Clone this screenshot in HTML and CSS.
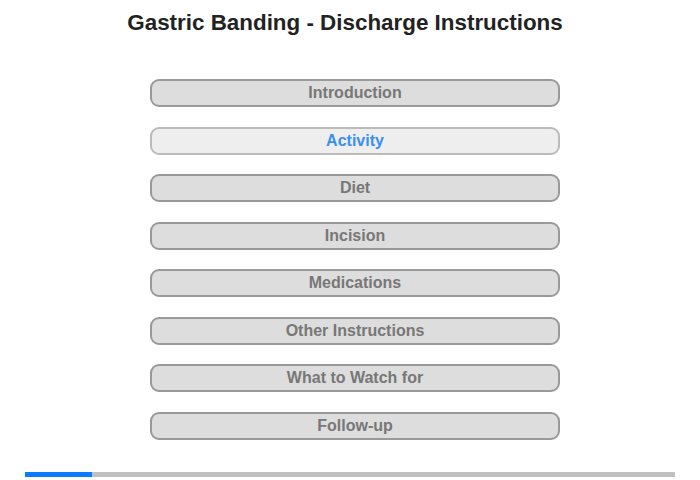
FILE: index.html
```html
<!DOCTYPE html>
<html lang="en">
<head>
  <meta charset="UTF-8" />
  <meta name="viewport" content="width=device-width, initial-scale=1.0"/>
  <title>Gastric Banding - Discharge Instructions</title>
  <link rel="stylesheet" href="styles.css">
</head>
<body>
  <h1 class="title">Gastric Banding - Discharge Instructions</h1>

  <nav class="menu">
    <a class="menu-btn" href="#">Introduction</a>
    <a class="menu-btn active" href="#">Activity</a>
    <a class="menu-btn" href="#">Diet</a>
    <a class="menu-btn" href="#">Incision</a>
    <a class="menu-btn" href="#">Medications</a>
    <a class="menu-btn" href="#">Other Instructions</a>
    <a class="menu-btn" href="#">What to Watch for</a>
    <a class="menu-btn" href="#">Follow-up</a>
  </nav>

  <div class="progress">
    <div class="progress-fill" style="width: 67px"></div>
  </div>
</body>
</html>
```

FILE: styles.css
```css
body {
  font-family: 'Liberation Sans', Arial, sans-serif;
  background: white;
  margin: 0;
  padding: 0;
}
.title {
  margin: 0;
  padding: 10px 10px 0 0;
  font-size: 22.4px;
  line-height: 26px;
  font-weight: bold;
  color: #222;
  text-align: center;
}
.menu {
  display: flex;
  flex-direction: column;
  align-items: center;
  gap: 19.5px;
  margin-top: 43px;
}
.menu-btn {
  box-sizing: border-box;
  width: 410px;
  height: 28px;
  line-height: 24px;
  margin-left: 10px;
  border: 2px solid #999;
  border-radius: 9px;
  background: #ddd;
  color: #777;
  font-size: 16px;
  font-weight: bold;
  text-align: center;
  text-decoration: none;
}
.menu-btn.active {
  background: #eee;
  border-color: #bbb;
  color: #3b8ff0;
}
.progress {
  margin: 32.5px 25px 0;
  height: 5px;
  background: #c0c0c0;
}
.progress-fill {
  height: 100%;
  background: #0a7cff;
}
```
